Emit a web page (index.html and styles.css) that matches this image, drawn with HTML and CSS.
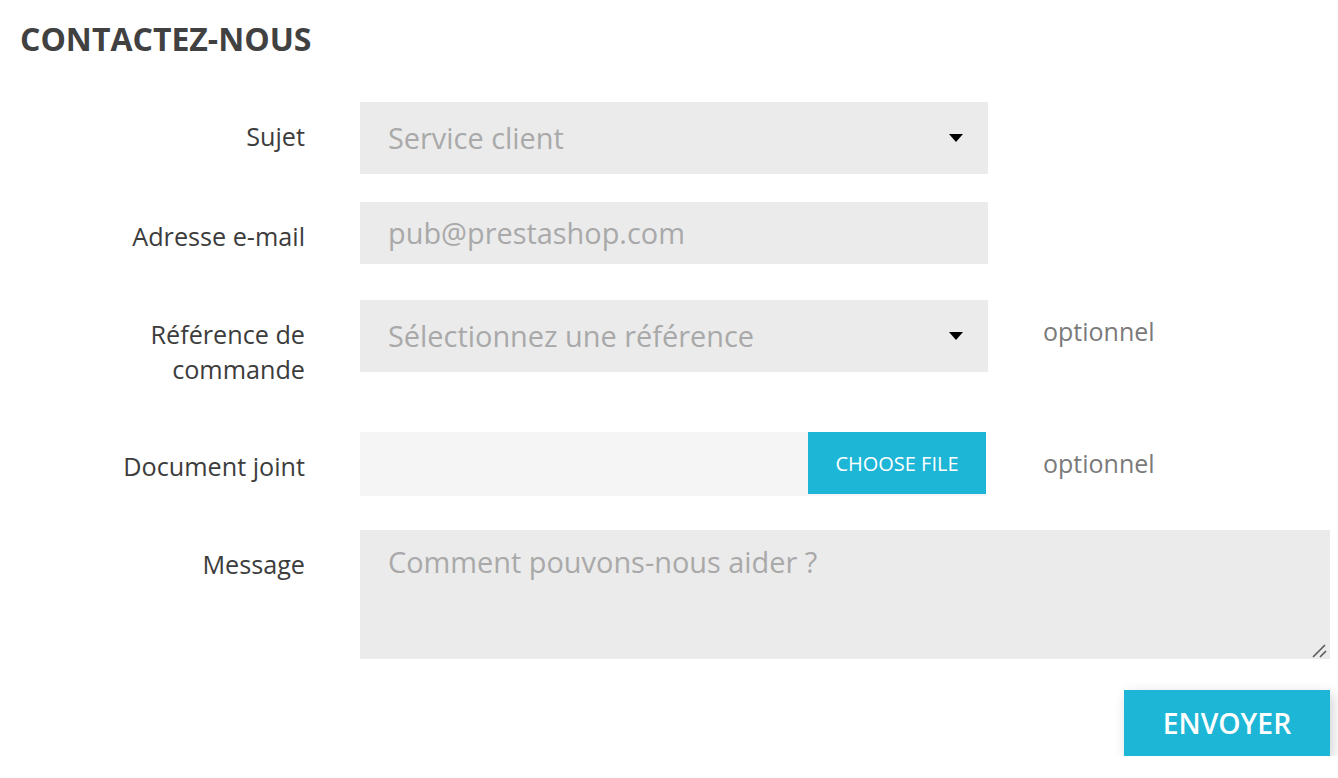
FILE: index.html
```html
<!DOCTYPE html>
<html lang="fr">
<head>
<meta charset="utf-8">
<title>Contactez-nous</title>
<link rel="stylesheet" href="styles.css">
</head>
<body>
<main class="page">
  <h1 class="title">CONTACTEZ-NOUS</h1>
  <form class="form">
    <div class="row">
      <label class="label">Sujet</label>
      <div class="control select">
        <span class="value">Service client</span>
        <svg class="caret" width="14" height="8" viewBox="0 0 14 8"><path d="M0 0h14L7 8z" fill="#000"/></svg>
      </div>
      <div class="aside"></div>
    </div>
    <div class="row">
      <label class="label">Adresse e-mail</label>
      <div class="control input"><span class="value">pub@prestashop.com</span></div>
      <div class="aside"></div>
    </div>
    <div class="row row-tall">
      <label class="label">Référence de<br>commande</label>
      <div class="control select">
        <span class="value">Sélectionnez une référence</span>
        <svg class="caret" width="14" height="8" viewBox="0 0 14 8"><path d="M0 0h14L7 8z" fill="#000"/></svg>
      </div>
      <div class="aside">optionnel</div>
    </div>
    <div class="row row-file">
      <label class="label">Document joint</label>
      <div class="file">
        <div class="file-name"></div>
        <span class="file-btn">CHOOSE FILE</span>
      </div>
      <div class="aside">optionnel</div>
    </div>
    <div class="row">
      <label class="label">Message</label>
      <div class="textarea-wrap">
        <textarea class="textarea" placeholder="Comment pouvons-nous aider ?"></textarea>
        <svg class="grip" width="16" height="16" viewBox="0 0 16 16"><path d="M2 15L14 3M9 15L15 9" stroke="#5a5a5a" stroke-width="1.6" fill="none"/></svg>
      </div>
    </div>
    <div class="actions">
      <button type="button" class="submit">ENVOYER</button>
    </div>
  </form>
</main>
</body>
</html>
```
FILE: styles.css
```css
* { box-sizing: border-box; }
html, body { margin: 0; padding: 0; background: #fff; }
body {
  font-family: "Open Sans", "Noto Sans", sans-serif;
  color: #3a3a3a;
}
.page {
  padding: 17px 8px 0 20px;
}
.title {
  margin: 0 0 41px;
  font-size: 32px;
  font-weight: 700;
  color: #414141;
  line-height: 44px;
}
.row {
  display: grid;
  grid-template-columns: 285px 628px 1fr;
  column-gap: 55px;
  align-items: start;
  margin-bottom: 28px;
}
.row-tall { margin-bottom: 27px; }
.row-file { margin-bottom: 28px; }
.label {
  text-align: right;
  font-size: 25.2px;
  line-height: 35px;
  padding: 17px 0 18px;
  color: #3c3c3c;
}
.control {
  background: #ebebeb;
  display: flex;
  align-items: center;
  padding: 0 25px 0 28px;
  font-size: 28.9px;
  color: #a9a9a9;
}
.select { height: 72px; justify-content: space-between; }
.input { height: 62px; }
.value { line-height: 36px; }
.caret { flex: none; display: block; }
.aside {
  font-size: 25px;
  line-height: 36px;
  padding-top: 13px;
  color: #7a7a7a;
}
.file {
  display: flex;
  height: 64px;
  background: #f5f5f5;
  width: 626px;
}
.file-name { flex: 1; }
.file-btn {
  width: 178px;
  height: 62px;
  background: #1db6d6;
  color: #fff;
  font-size: 20px;
  display: flex;
  align-items: center;
  justify-content: center;
}
.textarea-wrap {
  grid-column: 2 / 4;
  position: relative;
}
.textarea {
  height: 129px;
  border: 0;
  background: #ebebeb;
  font-family: "Open Sans", "Noto Sans", sans-serif;
  font-size: 28.9px;
  line-height: 36px;
  padding: 14px 28px;
  resize: none;
  color: #3a3a3a;
  outline: none;
  display: block;
  width: 100%;
}
.textarea::placeholder { color: #a9a9a9; }
.grip {
  position: absolute;
  right: 3px;
  bottom: 1px;
  display: block;
}
.actions {
  display: flex;
  justify-content: flex-end;
  margin-top: -28px;
  padding-top: 31px;
}
.submit {
  width: 206px;
  height: 66px;
  border: 0;
  background: #1db6d6;
  color: #fff;
  font-family: "Open Sans", "Noto Sans", sans-serif;
  font-weight: 600;
  font-size: 28.3px;
  box-shadow: 3px 4px 12px rgba(0, 0, 0, 0.18);
  cursor: pointer;
}
```
